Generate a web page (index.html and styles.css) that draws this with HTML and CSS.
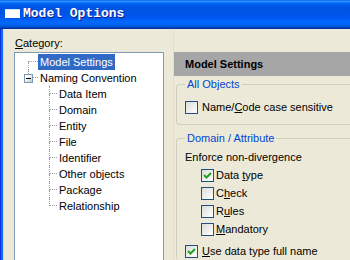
FILE: index.html
```html
<!DOCTYPE html>
<html lang="en">
<head>
  <meta charset="UTF-8">
  <title>Model Options</title>
  <link rel="stylesheet" href="styles.css">
</head>
<body>
  <div class="window">
    <div class="titlebar">
      <span class="app-icon"></span>
      <h1>Model Options</h1>
    </div>
    <div class="frame">
      <div class="edge"></div>

      <div class="category">
        <p class="caption"><u>C</u>ategory:</p>
        <div class="tree">
          <div class="row first">
            <span class="pad root-pad"></span>
            <span class="branch root-branch"><i class="up"></i><i class="down"></i></span>
            <span class="label selected">Model Settings</span>
          </div>
          <div class="row">
            <span class="pad box-pad"></span>
            <span class="expander"><i class="lead"></i><b class="toggle"></b></span>
            <span class="stub"></span>
            <span class="label">Naming Convention</span>
          </div>
          <div class="row">
            <span class="pad child-pad"></span>
            <span class="branch"><i class="up"></i><i class="down"></i></span>
            <span class="label">Data Item</span>
          </div>
          <div class="row">
            <span class="pad child-pad"></span>
            <span class="branch"><i class="up"></i><i class="down"></i></span>
            <span class="label">Domain</span>
          </div>
          <div class="row">
            <span class="pad child-pad"></span>
            <span class="branch"><i class="up"></i><i class="down"></i></span>
            <span class="label">Entity</span>
          </div>
          <div class="row">
            <span class="pad child-pad"></span>
            <span class="branch"><i class="up"></i><i class="down"></i></span>
            <span class="label">File</span>
          </div>
          <div class="row">
            <span class="pad child-pad"></span>
            <span class="branch"><i class="up"></i><i class="down"></i></span>
            <span class="label">Identifier</span>
          </div>
          <div class="row">
            <span class="pad child-pad"></span>
            <span class="branch"><i class="up"></i><i class="down"></i></span>
            <span class="label">Other objects</span>
          </div>
          <div class="row">
            <span class="pad child-pad"></span>
            <span class="branch"><i class="up"></i><i class="down"></i></span>
            <span class="label">Package</span>
          </div>
          <div class="row last">
            <span class="pad child-pad"></span>
            <span class="branch"><i class="up"></i><i class="down"></i></span>
            <span class="label">Relationship</span>
          </div>
        </div>
      </div>

      <div class="settings">
        <h2 class="heading">Model Settings</h2>

        <fieldset class="group first-group">
          <legend>All Objects</legend>
          <div class="option">
            <span class="box"></span>
            <span>Name/<u>C</u>ode case sensitive</span>
          </div>
        </fieldset>

        <fieldset class="group second-group">
          <legend>Domain / Attribute</legend>
          <p class="note">Enforce non-divergence</p>
          <div class="option nested">
            <span class="box"><svg width="11" height="11" viewBox="0 0 11 11"><path d="M2 5 L4.5 7.5 L9 3" fill="none" stroke="#21a121" stroke-width="2"/></svg></span>
            <span>Data <u>t</u>ype</span>
          </div>
          <div class="option nested">
            <span class="box"></span>
            <span>C<u>h</u>eck</span>
          </div>
          <div class="option nested">
            <span class="box"></span>
            <span>R<u>u</u>les</span>
          </div>
          <div class="option nested">
            <span class="box"></span>
            <span><u>M</u>andatory</span>
          </div>
          <div class="option spaced">
            <span class="box"><svg width="11" height="11" viewBox="0 0 11 11"><path d="M2 5 L4.5 7.5 L9 3" fill="none" stroke="#21a121" stroke-width="2"/></svg></span>
            <span><u>U</u>se data type full name</span>
          </div>
        </fieldset>
      </div>
    </div>
  </div>
</body>
</html>
```

FILE: styles.css
```css
*{
  margin: 0;
  padding: 0;
  box-sizing: border-box;
}
body {
  font-family: "Liberation Sans", Arial, sans-serif;
  font-size: 11px;
  color: #000;
  background-color: #ece9d8;
  width: 350px;
  height: 260px;
  overflow: hidden;
}
.window{
  width: 350px;
  height: 260px;
  display: flex;
  flex-direction: column;
  overflow: hidden;
}
.titlebar{
  height: 29px;
  flex-shrink: 0;
  display: flex;
  align-items: center;
  gap: 3px;
  padding: 0 0 2px 5px;
  background: linear-gradient(to bottom, #0058ee 0%, #3593ff 4%, #288eff 6%, #127dff 8%, #036ffc 10%, #0262ee 14%, #0057e5 20%, #0054e3 24%, #0055eb 56%, #005bf5 66%, #026afe 76%, #0062ef 86%, #0052d6 92%, #0040ab 96%, #003092 100%);
}
.app-icon{
  width: 15px;
  height: 9px;
  background: #fff;
  border-top: 1px solid #cfe0ff;
}
.titlebar h1{
  font-family: "Liberation Mono", "DejaVu Sans Mono", monospace;
  font-size: 13px;
  font-weight: bold;
  color: #fff;
  text-shadow: 1px 1px #0f1e8a;
}
.frame{
  flex: 1;
  min-height: 0;
  display: flex;
  overflow: hidden;
}
.edge{
  width: 4px;
  flex-shrink: 0;
  background: linear-gradient(to right, #0831d9 0, #0831d9 1px, #166aee 1px, #166aee 3px, #dcd9ca 3px);
}

/* category tree */
.category{
  padding: 7px 0 0 10px;
}
.caption{
  line-height: 14px;
  padding-left: 1px;
  margin-bottom: 2px;
}
.tree{
  width: 150px;
  height: 208px;
  background: #fff;
  border: 1px solid #7f9db9;
  border-bottom: none;
  padding-top: 1px;
}
.row{
  display: flex;
  height: 16px;
}
.pad{ flex-shrink: 0; }
.root-pad{ width: 13px; }
.box-pad{ width: 9px; }
.child-pad{ width: 34px; }
.branch{
  width: 8px;
  flex-shrink: 0;
  display: flex;
  flex-direction: column;
}
.root-branch{ width: 10px; }
.branch i{
  display: block;
  height: 8px;
  border-left: 1px dotted #a0a0a0;
}
.branch .up{ border-bottom: 1px dotted #a0a0a0; }
.first .up{ border-left: none; }
.last .down{ border-left: none; }
.expander{
  width: 9px;
  flex-shrink: 0;
  display: flex;
  flex-direction: column;
}
.expander .lead{
  display: block;
  height: 4px;
  margin-left: 4px;
  border-left: 1px dotted #a0a0a0;
}
.toggle{
  display: flex;
  align-items: center;
  justify-content: center;
  width: 9px;
  height: 9px;
  border: 1px solid #7898b5;
  background: linear-gradient(135deg, #fff 30%, #c6c6bc);
}
.toggle::before{
  content: "";
  width: 5px;
  height: 1px;
  background: #000;
}
.stub{
  width: 5px;
  height: 8px;
  flex-shrink: 0;
  border-bottom: 1px dotted #a0a0a0;
}
.label{
  line-height: 16px;
  padding: 0 2px;
  white-space: nowrap;
}
.selected{
  background: #316ac5;
  color: #fff;
}

/* settings panel */
.settings{
  width: 177px;
  flex-shrink: 0;
  margin-left: 9px;
  padding-top: 23px;
  border-left: 1px solid #e2dfd0;
  overflow: hidden;
}
.heading{
  height: 24px;
  line-height: 24px;
  padding-left: 11px;
  font-size: 11px;
  font-weight: bold;
  background: #a6a6a6;
}
.group{
  margin: 0 0 0 2px;
  width: 200px;
  border: 1px solid #d0d0bf;
  border-radius: 3px;
  padding: 0 8px;
}
.group legend{
  color: #0046d5;
  line-height: 14px;
  padding: 0 2px;
}
.first-group{
  margin-top: 1px;
  padding-top: 7px;
  padding-bottom: 8px;
}
.second-group{
  margin-top: 6px;
  padding-top: 3px;
  padding-bottom: 0;
  border-bottom: none;
}
.note{
  line-height: 18px;
}
.option{
  display: flex;
  align-items: center;
  gap: 4px;
  height: 18px;
  white-space: nowrap;
}
.option.nested{
  padding-left: 16px;
  gap: 2px;
}
.option.spaced{
  margin-top: 4px;
}
.box{
  width: 13px;
  height: 13px;
  flex-shrink: 0;
  border: 1px solid #1c5180;
  background: linear-gradient(135deg, #dcdcd7, #fff);
  display: flex;
  align-items: center;
  justify-content: center;
}
```
